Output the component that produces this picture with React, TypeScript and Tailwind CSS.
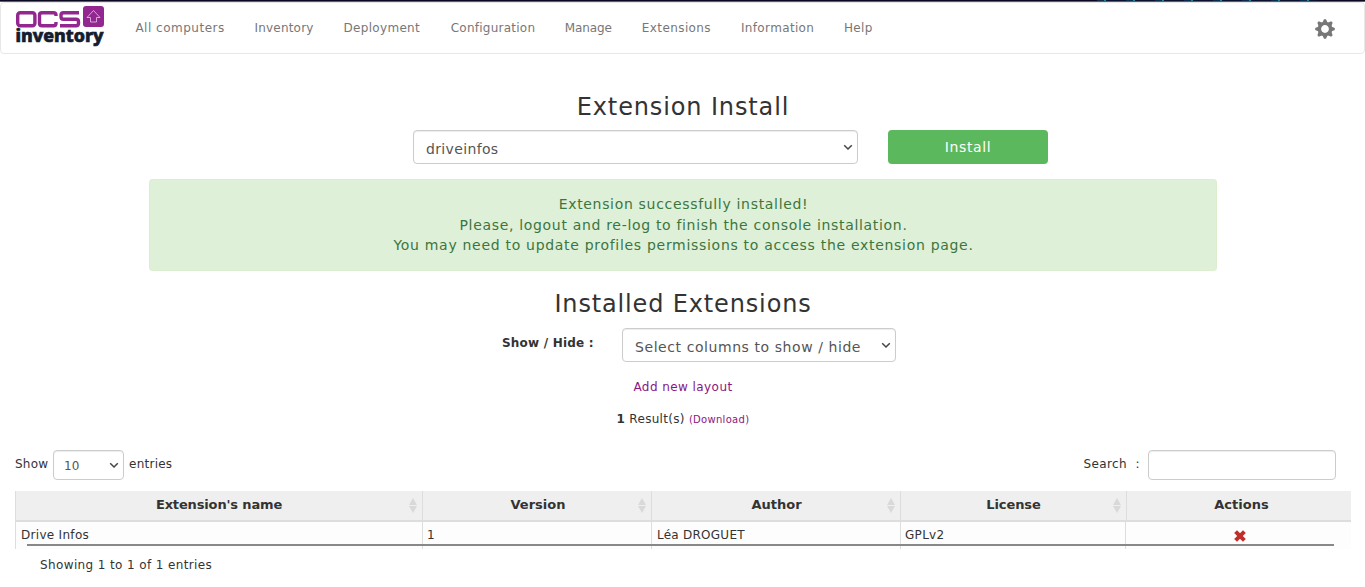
import React from "react";

const navItems = [
  { label: "All computers", cls: "w-[89px] tracking-[0.5px]" },
  { label: "Inventory", cls: "w-[59px] tracking-[0.2px]" },
  { label: "Deployment", cls: "w-[77px] tracking-[0.3px]" },
  { label: "Configuration", cls: "w-[84px] tracking-[0.25px]" },
  { label: "Manage", cls: "w-[47px] tracking-[-0.1px]" },
  { label: "Extensions", cls: "w-[69px] tracking-[0.4px]" },
  { label: "Information", cls: "w-[73px] tracking-[0.35px]" },
  { label: "Help", cls: "w-[30px] tracking-[0.3px]" },
];

const columns = [
  { label: "Extension's name", sortable: true, pad: "tracking-[-0.15px]" },
  { label: "Version", sortable: true, pad: "pl-[2px]" },
  { label: "Author", sortable: true, pad: "pl-px" },
  { label: "License", sortable: true, pad: "tracking-[-0.1px]" },
  { label: "Actions", sortable: false, pad: "pl-[5px]" },
];

function Logo() {
  return (
    <svg width="90" height="47" viewBox="0 0 90 47" className="block shrink-0">
      <g fill="none" stroke="#92278f" strokeWidth="3.4">
        <rect x="2.700" y="6.700" width="17.200" height="13" rx="2.500" />
        <path d="M41 10V9.200q0-2.500-2.500-2.500H27q-2.500 0-2.500 2.500v8q0 2.500 2.500 2.500h11.500q2.500 0 2.500-2.500V16" />
        <path d="M64 6.700H48.500q-2.500 0-2.500 2.500v1.500q0 2.500 2.500 2.500h12.500q2.500 0 2.500 2.500v1.500q0 2.500-2.500 2.500H45" />
      </g>
      <rect x="68" y="0" width="21" height="21" rx="3" fill="#92278f" />
      <path d="M78.500 4.500 L85 11.500 H81.500 V16 H75.500 V11.500 H72 Z" fill="none" stroke="#dcb4dc" strokeWidth="0.9" />
      <text x="0.500" y="36.300" textLength="88" lengthAdjust="spacingAndGlyphs" fontFamily="'Noto Sans', sans-serif" fontWeight="800" fontSize="17.800" fill="#141c30" stroke="#141c30" strokeWidth="0.700">inventory</text>
    </svg>
  );
}

function Cog() {
  return (
    <svg width="20" height="20" viewBox="-10 -10 20 20" className="block">
      <circle r="5.600" fill="none" stroke="#777" strokeWidth="3.400" />
      {[0, 45, 90, 135, 180, 225, 270, 315].map((a) => (
        <path key={a} d="M-2.600 -6.300 L-1 -9.800 H1 L2.600 -6.300Z" fill="#777" transform={`rotate(${a})`} />
      ))}
    </svg>
  );
}

function Chevron() {
  return (
    <svg width="10" height="7" viewBox="0 0 10 7" className="block shrink-0">
      <path d="M1.200 1.200 L5 5 L8.800 1.200" fill="none" stroke="#444" strokeWidth="1.500" />
    </svg>
  );
}

function SortArrows() {
  return (
    <svg width="8" height="15" viewBox="0 0 8 15" className="block">
      <path d="M4 0 L8 7 H0Z M0 8 H8 L4 15Z" fill="#d9d9d9" />
    </svg>
  );
}

const field =
  "flex items-center rounded-[4px] border border-[#ccc] bg-white text-[#555] shadow-[inset_0_1px_1px_rgba(0,0,0,0.075)]";

export default function App() {
  return (
    <div className="h-[587px] w-[1365px] overflow-hidden bg-white font-['DejaVu_Sans',sans-serif] text-[12px] leading-[17px] whitespace-nowrap text-[#333]">
      <div className="flex h-[2px] bg-[linear-gradient(#0b0a22_50%,#5b5b6b_50%)]">
        <div className="ml-[1097px] h-px w-[220px] bg-[repeating-linear-gradient(90deg,#0c2b4d_0_7px,#1d8494_7px_9px,#0b1230_9px_29px)]" />
      </div>
      <nav className="flex h-[52px] rounded-[4px] border border-[#e7e7e7] bg-white pt-[3px] pl-[14px] text-[#777]">
        <Logo />
        <div className="ml-[30.400px] flex gap-[30.100px] pt-[14px]">
          {navItems.map((n) => (
            <a key={n.label} className={n.cls}>{n.label}</a>
          ))}
        </div>
        <div className="mr-[29px] ml-auto pt-[13px]"><Cog /></div>
      </nav>

      <h2 className="mt-[40px] h-[26px] pl-px text-center text-[24px] leading-[26px] tracking-[0.87px]">Extension Install</h2>
      <div className="mt-[10px] flex gap-[30px] pl-[413px]">
        <div className={`${field} h-[34px] w-[445px] justify-between pr-1 pl-3 text-[14px] tracking-[0.35px]`}>
          <span className="pt-[4px]">driveinfos</span>
          <Chevron />
        </div>
        <button className="h-[34px] w-[160px] rounded-[4px] bg-[#5cb85c] pt-px text-[14px] tracking-[0.6px] text-white">Install</button>
      </div>

      <div className="mt-[15px] ml-[149px] h-[92px] w-[1068px] rounded-[4px] border border-[#d6e9c6]/40 bg-[#dff0d8] pt-[14px] pl-px text-center text-[14px] leading-[20.500px] text-[#3c763d]">
        <p className="tracking-[0.68px]">Extension successfully installed!</p>
        <p className="tracking-[0.68px]">Please, logout and re-log to finish the console installation.</p>
        <p className="tracking-[0.7px]">You may need to update profiles permissions to access the extension page.</p>
      </div>

      <h2 className="mt-[20px] h-[26px] pl-px text-center text-[24px] leading-[26px] tracking-[0.85px]">Installed Extensions</h2>
      <div className="mt-[11px] flex h-[34px] pl-[502px]">
        <b className="w-[120px] pt-[7px] text-[12px] tracking-[0.2px]">Show / Hide :</b>
        <div className={`${field} w-[274px] justify-between pr-1 pl-3 text-[14px] tracking-[0.57px]`}>
          <span className="pt-[4px]">Select columns to show / hide</span>
          <Chevron />
        </div>
      </div>
      <div className="mt-[17px] pl-px text-center tracking-[0.43px] text-[#8a1682]">Add new layout</div>
      <div className="mt-[15px] pl-px text-center tracking-[0.3px]">
        <b>1</b> Result(s) <a className="text-[10px] tracking-[0.300px] text-[#8a1682]">(Download)</a>
      </div>

      <div className="mt-[22px] flex h-[30px] pr-[29px] pl-[15px]">
        <span className="w-[38px] pt-[6px] tracking-[0.25px]">Show</span>
        <div className={`${field} w-[71px] justify-between pr-1 pl-[10px] text-[12px]`}>
          <span className="pt-[2px]">10</span>
          <Chevron />
        </div>
        <span className="pt-[6px] pl-[5px] tracking-[0.25px]">entries</span>
        <span className="ml-auto pt-[6px] tracking-[0.4px]">Search&nbsp; :</span>
        <div className={`${field} ml-[8px] w-[188px]`} />
      </div>

      <div className="relative mt-[11px] ml-[15px] w-[1336px]">
        <div className="grid h-[31px] grid-cols-[407px_229px_249px_226px_225px] border-b-2 border-[#ddd] bg-[#efefef] text-[13px] font-bold">
          {columns.map((c) => (
            <div key={c.label} className="flex items-center border-l border-[#ddd]">
              <span className={`${c.pad} flex-1 pb-[2px] text-center`}>{c.label}</span>
              {c.sortable && <div className="-ml-[13px] mr-[5px]"><SortArrows /></div>}
            </div>
          ))}
        </div>
        <div className="grid h-[27px] grid-cols-[407px_229px_249px_225px_226px] bg-[#fdfdfd] leading-[26px]">
          <div className="border-l border-[#ddd] pl-[5px] tracking-[0.3px]">Drive Infos</div>
          <div className="border-l border-[#ddd] pl-[4px]">1</div>
          <div className="border-l border-[#ddd] pl-[5px] tracking-[0.25px]">Léa DROGUET</div>
          <div className="border-l border-[#ddd] pl-[4px] tracking-[0.3px]">GPLv2</div>
          <div className="flex justify-center border-l border-[#ddd] pt-[8px] pl-[3px]">
            <svg width="12" height="12" viewBox="0 0 12 12"><path d="M1.600 1.600 L10.400 10.400 M10.400 1.600 L1.600 10.400" stroke="#c12e2a" strokeWidth="4" /></svg>
          </div>
        </div>
        <div className="absolute top-[53px] left-[12px] h-[2px] w-[1307px] bg-[#888]" />
      </div>
      <div className="mt-[8px] pl-[40px] tracking-[0.38px]">Showing 1 to 1 of 1 entries</div>
    </div>
  );
}
